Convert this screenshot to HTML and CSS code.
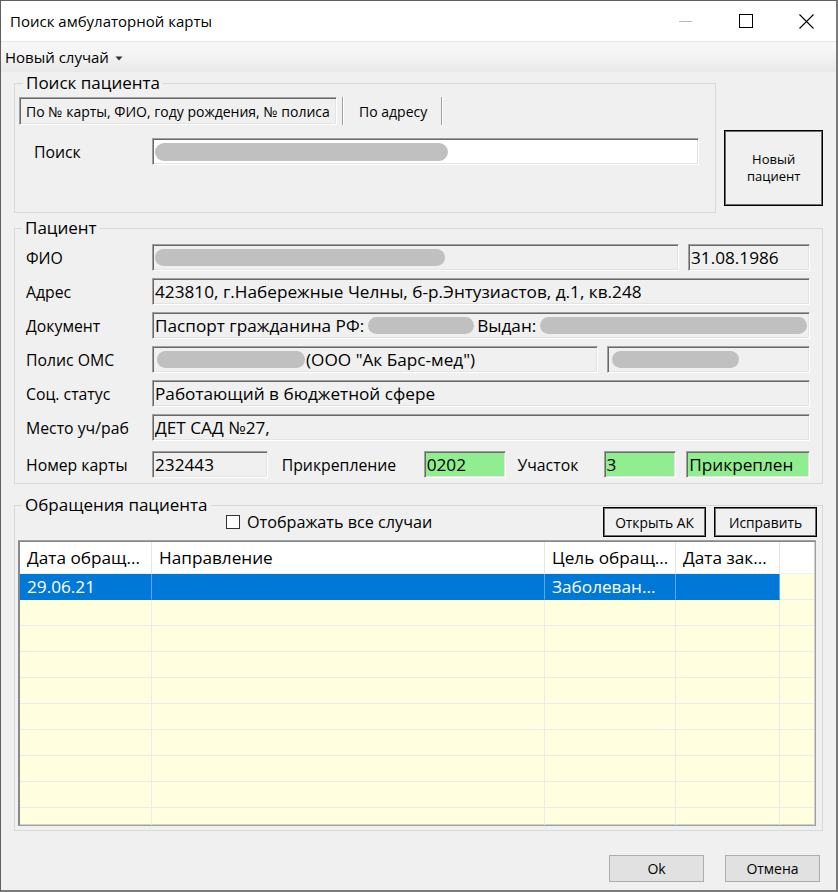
FILE: index.html
```html
<!DOCTYPE html>
<html lang="ru">
<head>
<meta charset="utf-8">
<title>Поиск амбулаторной карты</title>
<link rel="stylesheet" href="styles.css">
</head>
<body>
<div class="window">
  <div class="titlebar">
    <span class="title">Поиск амбулаторной карты</span>
    <div class="controls">
      <span class="ctl"><svg width="14" height="14" viewBox="0 0 14 14"><path d="M0 7.5H13" stroke="#b8b8b8" stroke-width="1"/></svg></span>
      <span class="ctl"><svg width="14" height="14" viewBox="0 0 14 14"><rect x="0.5" y="0.5" width="13" height="13" fill="none" stroke="#000" stroke-width="1"/></svg></span>
      <span class="ctl"><svg width="15" height="15" viewBox="0 0 15 15"><path d="M0.5 0.5L14.5 14.5M14.5 0.5L0.5 14.5" stroke="#000" stroke-width="1.1"/></svg></span>
    </div>
  </div>
  <div class="menubar">
    <span class="menu-item">Новый случай <svg class="caret" width="8" height="5" viewBox="0 0 8 5"><path d="M0.5 0.5H7.5L4 4.5Z" fill="#333"/></svg></span>
  </div>
  <div class="content">
    <div class="search-row">
      <fieldset class="group search-group">
        <legend>Поиск пациента</legend>
        <div class="tabs">
          <span class="tab active">По № карты, ФИО, году рождения, № полиса</span>
          <span class="tab-sep"></span>
          <span class="tab">По адресу</span>
          <span class="tab-sep"></span>
        </div>
        <div class="search-line">
          <span class="search-label">Поиск</span>
          <div class="field white search-field"><span class="blur b-search"></span></div>
        </div>
      </fieldset>
      <button class="btn-dark new-patient">Новый<br>пациент</button>
    </div>

    <fieldset class="group patient-group">
      <legend>Пациент</legend>
      <div class="rows">
        <div class="row">
          <span class="lbl">ФИО</span>
          <div class="field f-fio"><span class="blur b-fio"></span></div>
          <div class="field f-date">31.08.1986</div>
        </div>
        <div class="row">
          <span class="lbl">Адрес</span>
          <div class="field f-full">423810, г.Набережные Челны, б-р.Энтузиастов, д.1, кв.248</div>
        </div>
        <div class="row">
          <span class="lbl">Документ</span>
          <div class="field f-full"><span>Паспорт гражданина РФ:</span><span class="blur b-doc1"></span><span>Выдан:</span><span class="blur b-doc2"></span></div>
        </div>
        <div class="row">
          <span class="lbl">Полис ОМС</span>
          <div class="field f-polis"><span class="blur b-polis"></span><span>(ООО "Ак Барс-мед")</span></div>
          <div class="field f-polis2"><span class="blur b-polis2"></span></div>
        </div>
        <div class="row">
          <span class="lbl">Соц. статус</span>
          <div class="field f-full">Работающий в бюджетной сфере</div>
        </div>
        <div class="row">
          <span class="lbl">Место уч/раб</span>
          <div class="field f-full">ДЕТ САД №27,</div>
        </div>
        <div class="row last-row">
          <span class="lbl">Номер карты</span>
          <div class="field f-card">232443</div>
          <span class="lbl2 l-attach">Прикрепление</span>
          <div class="field green f-attach">0202</div>
          <span class="lbl2 l-area">Участок</span>
          <div class="field green f-area">3</div>
          <div class="field green f-status">Прикреплен</div>
        </div>
      </div>
    </fieldset>

    <fieldset class="group appeals-group">
      <legend>Обращения пациента</legend>
      <div class="toolbar">
        <span class="checkbox"></span>
        <span class="check-label">Отображать все случаи</span>
        <span class="spacer"></span>
        <button class="btn-dark tb-btn">Открыть АК</button>
        <button class="btn-dark tb-btn">Исправить</button>
      </div>
      <div class="grid">
        <div class="grid-row head">
          <div class="cell c1">Дата обращ...</div>
          <div class="cell c2">Направление</div>
          <div class="cell c3">Цель обращ...</div>
          <div class="cell c4">Дата зак...</div>
          <div class="cell c5"></div>
        </div>
        <div class="grid-row sel">
          <div class="cell c1">29.06.21</div>
          <div class="cell c2"></div>
          <div class="cell c3">Заболеван...</div>
          <div class="cell c4"></div>
          <div class="cell c5"></div>
        </div>
        <div class="grid-row"><div class="cell c1"></div><div class="cell c2"></div><div class="cell c3"></div><div class="cell c4"></div><div class="cell c5"></div></div>
        <div class="grid-row"><div class="cell c1"></div><div class="cell c2"></div><div class="cell c3"></div><div class="cell c4"></div><div class="cell c5"></div></div>
        <div class="grid-row"><div class="cell c1"></div><div class="cell c2"></div><div class="cell c3"></div><div class="cell c4"></div><div class="cell c5"></div></div>
        <div class="grid-row"><div class="cell c1"></div><div class="cell c2"></div><div class="cell c3"></div><div class="cell c4"></div><div class="cell c5"></div></div>
        <div class="grid-row"><div class="cell c1"></div><div class="cell c2"></div><div class="cell c3"></div><div class="cell c4"></div><div class="cell c5"></div></div>
        <div class="grid-row"><div class="cell c1"></div><div class="cell c2"></div><div class="cell c3"></div><div class="cell c4"></div><div class="cell c5"></div></div>
        <div class="grid-row"><div class="cell c1"></div><div class="cell c2"></div><div class="cell c3"></div><div class="cell c4"></div><div class="cell c5"></div></div>
        <div class="grid-row"><div class="cell c1"></div><div class="cell c2"></div><div class="cell c3"></div><div class="cell c4"></div><div class="cell c5"></div></div>
        <div class="grid-row"><div class="cell c1"></div><div class="cell c2"></div><div class="cell c3"></div><div class="cell c4"></div><div class="cell c5"></div></div>
      </div>
    </fieldset>

    <div class="bottom">
      <button class="btn">Ok</button>
      <button class="btn">Отмена</button>
    </div>
  </div>
</div>
</body>
</html>
```

FILE: styles.css
```css
* { box-sizing: border-box; }
html, body { margin: 0; padding: 0; }
body {
  background: #f0f0f0;
  font-family: "Open Sans", "Liberation Sans", Arial, sans-serif;
  color: #000;
}
.window {
  width: 838px;
  height: 892px;
  border: 1px solid #5f5f5f;
  border-right: 2px solid #7a7a7a;
  border-bottom: 2px solid #7a7a7a;
  background: #f0f0f0;
  display: flex;
  flex-direction: column;
  overflow: hidden;
}
.titlebar {
  height: 40px;
  flex: none;
  background: #fff;
  display: flex;
  align-items: center;
}
.title {
  flex: 1;
  padding-left: 9px;
  font-size: 15px;
  line-height: 20px;
}
.controls { display: flex; align-self: stretch; }
.ctl {
  width: 60px;
  display: flex;
  align-items: center;
  justify-content: center;
}
.menubar {
  height: 31px;
  flex: none;
  border-top: 1px solid #e6e6e6;
  background: linear-gradient(#f9f9f9, #f1f1f1 60%, #e8e8e8);
  display: flex;
  align-items: center;
  padding-left: 4px;
}
.menu-item {
  font-size: 15px;
  line-height: 20px;
  display: flex;
  align-items: center;
}
.caret { margin-left: 6px; margin-top: 2px; }

.content {
  flex: 1;
  padding: 3px 13px 0 13px;
  display: flex;
  flex-direction: column;
}

/* group boxes */
.group {
  margin: 0;
  min-width: 0;
  border: 1px solid #d8d8d8;
  padding: 0 4px;
}
.group legend {
  font-size: 17px;
  line-height: 16px;
  height: 16px;
  padding: 0 3px;
  margin-left: 4px;
  color: #000;
}

.search-row { display: flex; align-items: flex-start; }
.search-group {
  width: 704px;
  height: 138px;
  padding-top: 6px;
}
.tabs { display: flex; align-items: stretch; height: 28px; }
.tab {
  display: flex;
  align-items: center;
  font-size: 14px;
  padding: 0 14px;
}
.tab.active {
  width: 318px;
  padding: 0 0 0 6px;
  border: 1px solid;
  border-color: #a0a0a0 #ffffff #ffffff #a0a0a0;
  box-shadow: inset 1px 1px 0 #696969, inset -1px -1px 0 #e3e3e3;
  background: #f0f0f0;
}
.tab-sep {
  width: 2px;
  border-left: 1px solid #a0a0a0;
  border-right: 1px solid #ffffff;
  margin-left: 5px;
}
.tab-sep + .tab { padding: 0 9px 0 15px; }

.search-line {
  display: flex;
  align-items: center;
  margin-top: 13px;
}
.search-label {
  margin-left: 15px;
  width: 118px;
  font-size: 15.8px;
}
.search-field { width: 547px; height: 28px; }

.btn-dark {
  font-family: inherit;
  background: #f0f0f0;
  border: 1px solid #000;
  box-shadow: inset 0 0 0 1px #6d6d6d;
  color: #000;
  padding: 0;
}
.new-patient {
  width: 99px;
  height: 76px;
  margin-left: 8px;
  margin-top: 55px;
  font-size: 13px;
  line-height: 17px;
}

/* fields */
.field {
  height: 27px;
  border: 1px solid;
  border-color: #a0a0a0 #ffffff #ffffff #a0a0a0;
  box-shadow: inset 1px 1px 0 #696969, inset -1px -1px 0 #e3e3e3;
  background: #f0f0f0;
  font-size: 17.2px;
  line-height: 25px;
  padding: 0 2px;
  display: flex;
  align-items: center;
  white-space: nowrap;
  overflow: hidden;
}
.field.white { background: #fff; }
.field.green { background: #90ee90; }

.blur {
  display: inline-block;
  height: 17px;
  border-radius: 9px;
  background: #c0c0c0;
  flex: none;
}
.b-search { width: 293px; height: 18px; }
.b-fio { width: 290px; }
.b-doc1 { width: 106px; margin: 0 3px 0 4px; }
.b-doc2 { flex: 1; margin-left: 4px; }
.b-polis { width: 148px; margin-left: 2px; margin-right: 1px; }
.b-polis2 { width: 127px; margin-left: 2px; }

/* patient */
.patient-group {
  margin-top: 7px;
  height: 264px;
  padding: 8px 12px 0 11px;
}
.patient-group legend { margin-left: -4px; }
.rows { display: flex; flex-direction: column; gap: 7px; }
.row { display: flex; align-items: center; height: 27px; }
.last-row { margin-top: 3px; }
.lbl { width: 126px; flex: none; font-size: 15.8px; }
.lbl2 { font-size: 15.8px; flex: none; }
.f-fio { width: 527px; }
.f-date { width: 122px; margin-left: 9px; }
.f-full { width: 658px; }
.f-polis { width: 446px; }
.f-polis2 { width: 203px; margin-left: 9px; }
.f-card { width: 116px; }
.l-attach { margin-left: 14px; width: 142px; }
.f-attach { width: 82px; }
.l-area { margin-left: 12px; width: 86px; }
.f-area { width: 73px; }
.f-status { width: 124px; margin-left: 10px; }

/* appeals */
.appeals-group {
  margin-top: 13px;
  height: 334px;
  padding: 0 5px 0 3px;
  display: flex;
  flex-direction: column;
}
.toolbar {
  display: flex;
  align-items: center;
  height: 30px;
  margin-top: -6px;
}
.checkbox {
  width: 14px;
  height: 14px;
  border: 1px solid #333;
  background: #fff;
  margin-left: 208px;
}
.check-label { margin-left: 7px; font-size: 16.2px; }
.spacer { flex: 1; }
.tb-btn {
  width: 103px;
  height: 30px;
  font-size: 13.8px;
  margin-left: 8px;
}
.grid {
  margin-top: 3px;
  width: 798px;
  height: 286px;
  border: 1px solid;
  border-color: #a0a0a0 #a0a0a0 #a0a0a0 #8a8a8a;
  box-shadow: inset 1px 1px 0 #828790, inset -1px -1px 0 #d0d0d0;
  background: #ffffe0;
  padding: 1px;
  overflow: hidden;
}
.grid-row { display: flex; height: 26px; }
.grid-row.head { height: 32px; background: #fff; }
.cell {
  height: 100%;
  border-right: 1px solid #ebebeb;
  border-bottom: 1px solid #ebebeb;
  font-size: 17.2px;
  line-height: 24px;
  padding-left: 7px;
  white-space: nowrap;
  overflow: hidden;
  display: flex;
  align-items: center;
}
.head .cell { border-bottom: 1px solid #f0f0f0; border-right-color: #e5e5e5; }
.c1 { width: 132px; }
.c2 { width: 393px; }
.c3 { width: 131px; }
.c4 { width: 104px; }
.c5 { flex: 1; border-right: none; }
.sel .cell { background: #0078d7; color: #fff; border-right-color: #5ea6e6; border-bottom-color: #0078d7; }
.sel .cell.c5 { background: #ffffe0; border-bottom-color: #ebebeb; }

.bottom {
  display: flex;
  justify-content: flex-end;
  gap: 21px;
  margin-top: 24px;
  margin-right: 3px;
}
.btn {
  width: 95px;
  height: 27px;
  font-family: inherit;
  font-size: 14px;
  background: #e1e1e1;
  border: 1px solid #adadad;
  color: #000;
  padding: 0;
}
```
